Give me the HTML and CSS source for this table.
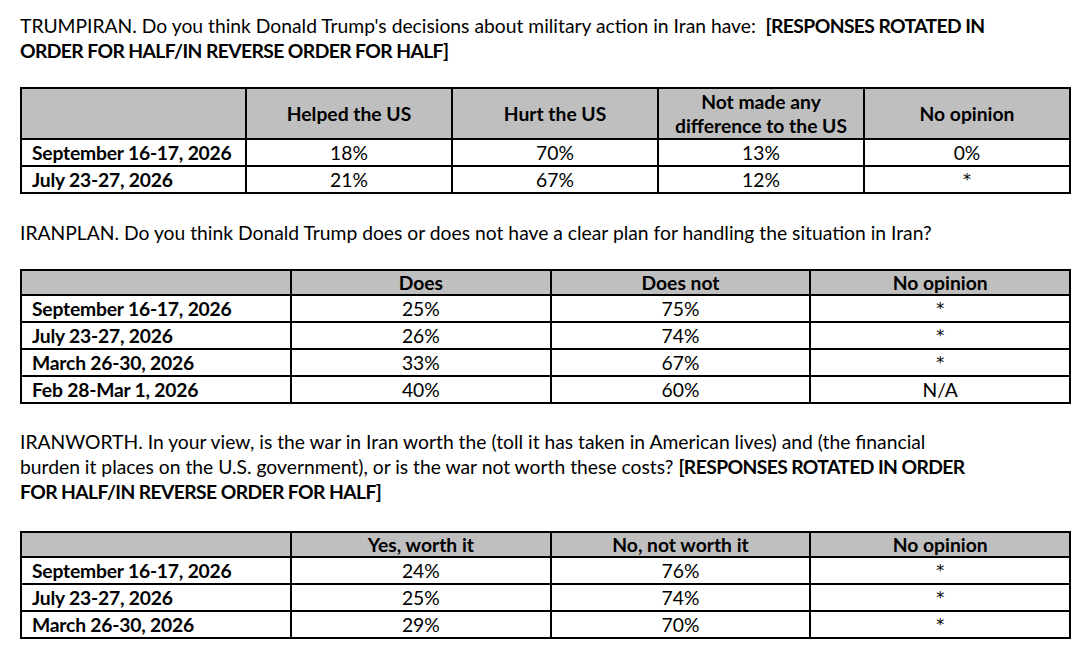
FILE: index.html
```html
<!DOCTYPE html>
<html lang="en">
<head>
    <meta charset="UTF-8">
    <title>Iran questions</title>
    <link rel="stylesheet" href="styles.css">
</head>
<body>
    <div class="page">
        <p class="question q-first">TRUMPIRAN. Do you think Donald Trump's decisions about military action in Iran have:&nbsp; <b>[RESPONSES ROTATED IN<br>ORDER FOR HALF/IN REVERSE ORDER FOR HALF]</b></p>

        <table class="poll poll-four">
            <colgroup>
                <col class="c-date"><col><col><col><col>
            </colgroup>
            <thead>
                <tr class="tall">
                    <th></th>
                    <th>Helped the US</th>
                    <th>Hurt the US</th>
                    <th>Not made any<br>difference to the US</th>
                    <th>No opinion</th>
                </tr>
            </thead>
            <tbody>
                <tr>
                    <td>September 16-17, 2026</td>
                    <td>18%</td>
                    <td>70%</td>
                    <td>13%</td>
                    <td>0%</td>
                </tr>
                <tr>
                    <td>July 23-27, 2026</td>
                    <td>21%</td>
                    <td>67%</td>
                    <td>12%</td>
                    <td class="star">*</td>
                </tr>
            </tbody>
        </table>

        <p class="question q-plan">IRANPLAN. Do you think Donald Trump does or does not have a clear plan for handling the situation in Iran?</p>

        <table class="poll poll-three">
            <colgroup>
                <col class="c-date"><col><col><col>
            </colgroup>
            <thead>
                <tr>
                    <th></th>
                    <th>Does</th>
                    <th>Does not</th>
                    <th>No opinion</th>
                </tr>
            </thead>
            <tbody>
                <tr>
                    <td>September 16-17, 2026</td>
                    <td>25%</td>
                    <td>75%</td>
                    <td class="star">*</td>
                </tr>
                <tr>
                    <td>July 23-27, 2026</td>
                    <td>26%</td>
                    <td>74%</td>
                    <td class="star">*</td>
                </tr>
                <tr>
                    <td>March 26-30, 2026</td>
                    <td>33%</td>
                    <td>67%</td>
                    <td class="star">*</td>
                </tr>
                <tr>
                    <td>Feb 28-Mar 1, 2026</td>
                    <td>40%</td>
                    <td>60%</td>
                    <td>N/A</td>
                </tr>
            </tbody>
        </table>

        <p class="question q-worth">IRANWORTH. In your view, is the war in Iran worth the (toll it has taken in American lives) and (the financial<br>burden it places on the U.S. government), or is the war not worth these costs? <b>[RESPONSES ROTATED IN ORDER<br>FOR HALF/IN REVERSE ORDER FOR HALF]</b></p>

        <table class="poll poll-three">
            <colgroup>
                <col class="c-date"><col><col><col>
            </colgroup>
            <thead>
                <tr>
                    <th></th>
                    <th>Yes, worth it</th>
                    <th>No, not worth it</th>
                    <th>No opinion</th>
                </tr>
            </thead>
            <tbody>
                <tr>
                    <td>September 16-17, 2026</td>
                    <td>24%</td>
                    <td>76%</td>
                    <td class="star">*</td>
                </tr>
                <tr>
                    <td>July 23-27, 2026</td>
                    <td>25%</td>
                    <td>74%</td>
                    <td class="star">*</td>
                </tr>
                <tr>
                    <td>March 26-30, 2026</td>
                    <td>29%</td>
                    <td>70%</td>
                    <td class="star">*</td>
                </tr>
            </tbody>
        </table>
    </div>
</body>
</html>
```

FILE: styles.css
```css
* {
    margin: 0;
    padding: 0;
    box-sizing: border-box;
}
body {
    background-color: #fff;
    color: #000;
    font-family: Lato, "Open Sans", sans-serif;
    font-size: 19.3px;
}
.page {
    width: 1053px;
    padding-left: 20px;
}
.question {
    line-height: 25px;
}
.question b {
    font-weight: 700;
    letter-spacing: -0.6px;
}
.q-first {
    margin-top: 13px;
    margin-bottom: 24px;
}
.q-plan {
    margin-top: 26px;
    margin-bottom: 24px;
}
.q-worth {
    margin-top: 25px;
    margin-bottom: 27px;
}
.poll {
    width: 1051px;
    border-collapse: collapse;
    table-layout: fixed;
}
.poll th, .poll td {
    border: 2px solid #000;
    height: 27px;
    line-height: 23px;
    padding: 0 10px;
    text-align: center;
    font-weight: 400;
    white-space: nowrap;
}
.poll th {
    background-color: #bfbfbf;
    font-weight: 700;
    height: 25px;
}
.poll td:first-child {
    text-align: left;
    font-weight: 700;
    letter-spacing: -0.2px;
    padding-right: 0;
}
.poll td.star {
    font-family: "DejaVu Sans", sans-serif;
    font-size: 16px;
}
.poll .tall th {
    height: 51px;
    line-height: 24px;
}
.poll-four .c-date {
    width: 225px;
}
.poll-three .c-date {
    width: 270px;
}
```
